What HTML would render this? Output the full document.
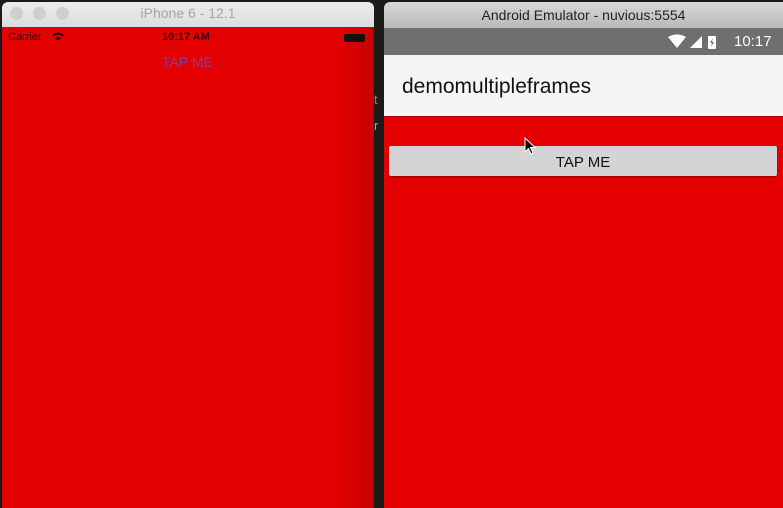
<!DOCTYPE html>
<html><head><style>
*{margin:0;padding:0;box-sizing:border-box}
body{width:783px;height:508px;background:#1a1a1a;position:relative;overflow:hidden;font-family:"Liberation Sans",sans-serif}
.abs{position:absolute}
</style></head><body>
<div class="abs" style="left:2px;top:2px;width:372px;height:26px;background:linear-gradient(#ececec,#dcdcdc);border-radius:6px 6px 0 0"></div>
<div class="abs" style="left:10px;top:7px;width:13px;height:13px;border-radius:50%;background:#cfcfcf"></div>
<div class="abs" style="left:33px;top:7px;width:13px;height:13px;border-radius:50%;background:#cfcfcf"></div>
<div class="abs" style="left:56px;top:7px;width:13px;height:13px;border-radius:50%;background:#cfcfcf"></div>
<div class="abs" style="left:2px;top:5px;width:372px;text-align:center;font-size:14px;color:#a5a5a5">iPhone 6 - 12.1</div>
<div class="abs" style="left:2px;top:27px;width:372px;height:481px;background:linear-gradient(90deg,#e30000 90%,#c80000)"></div>
<div class="abs" style="left:8px;top:31px;font-size:11px;color:#3a0000">Carrier</div>
<svg class="abs" style="left:51px;top:31px" width="14" height="11" viewBox="0 0 14 11"><path d="M1 4Q7-1 13 4L11.5 5.5Q7 2 2.5 5.5Z M4 7Q7 4.5 10 7L7 10Z" fill="#3a0000"/></svg>
<div class="abs" style="left:162px;top:31px;font-size:11px;font-weight:bold;color:#3a0000">10:17 AM</div>
<div class="abs" style="left:344px;top:34px;width:21px;height:8px;background:#111;border-radius:2px"></div>
<div class="abs" style="left:162px;top:54px;font-size:14px;color:#8a3a9a">TAP ME</div>
<div class="abs" style="left:374px;top:92px;font-size:13px;color:#a77">t</div>
<div class="abs" style="left:374px;top:118px;font-size:13px;color:#8ab">r</div>
<div class="abs" style="left:384px;top:2px;width:399px;height:26px;background:linear-gradient(#d8d8d8,#b8b8b8);border-radius:6px 0 0 0"></div>
<div class="abs" style="left:384px;top:7px;width:399px;text-align:center;font-size:14px;color:#222">Android Emulator - nuvious:5554</div>
<div class="abs" style="left:384px;top:28px;width:399px;height:27px;background:#6f6f6f"></div>
<svg class="abs" style="left:668px;top:34px" width="60" height="16" viewBox="0 0 60 16"><path d="M0 3Q9-2 18 3L9 14Z" fill="#fff"/><path d="M22 14L34 2V14Z" fill="#fff"/><rect x="40" y="2" width="8" height="13" rx="1" fill="#fff"/><path d="M45 4L42 9H44L43 13L46 8H44Z" fill="#6f6f6f"/></svg>
<div class="abs" style="left:734px;top:33px;font-size:15px;color:#fff">10:17</div>
<div class="abs" style="left:384px;top:55px;width:399px;height:62px;background:#f5f5f5;border-bottom:1px solid #b00"></div>
<div class="abs" style="left:402px;top:75px;font-size:21px;color:#111">demomultipleframes</div>
<div class="abs" style="left:384px;top:117px;width:399px;height:391px;background:#e50000"></div>
<div class="abs" style="left:389px;top:146px;width:388px;height:30px;background:#d4d4d6;border-radius:2px;box-shadow:0 1px 2px rgba(0,0,0,.4);text-align:center;line-height:31px;font-size:15px;color:#111"><span style="position:relative;top:1px">TAP ME</span></div>
<svg class="abs" style="left:524px;top:137px" width="12" height="20" viewBox="0 0 12 20"><path d="M1 1V15L4.5 11.5L7 17L9 16L6.5 10.5H11Z" fill="#000" stroke="#fff" stroke-width="1"/></svg>
</body></html>
